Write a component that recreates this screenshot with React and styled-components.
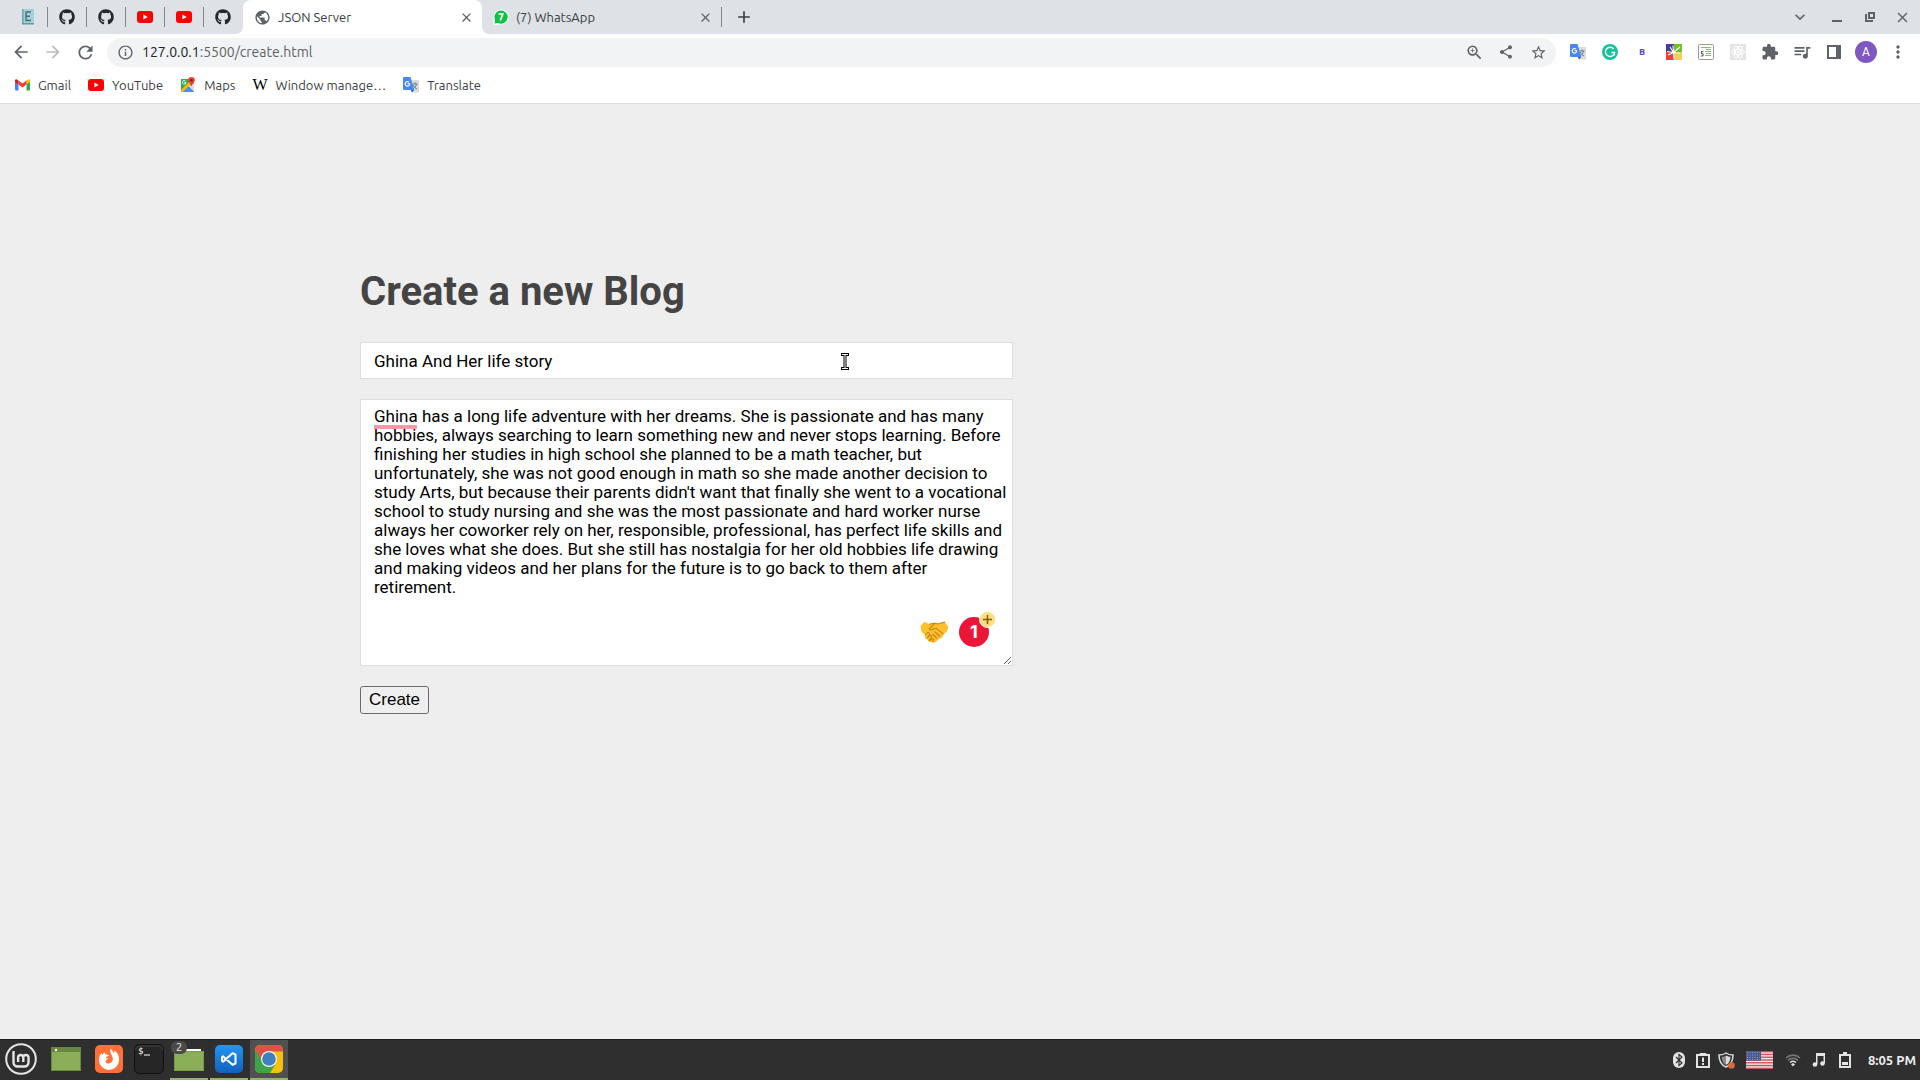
import React from 'react';
import styled, { createGlobalStyle } from 'styled-components';
import { FaGithub } from 'react-icons/fa';
import { MdArrowBack, MdArrowForward, MdRefresh, MdPublic, MdInfoOutline, MdZoomIn, MdShare, MdStarBorder, MdExtension, MdQueueMusic, MdMoreVert, MdClose, MdAdd, MdKeyboardArrowDown } from 'react-icons/md';

const Global = createGlobalStyle`
  * { box-sizing: border-box; }
  html, body { margin: 0; height: 100%; }
  #root { height: 100%; }
  body { background: #eee; }
`;
const UI = `"Ubuntu", "Noto Sans", "Open Sans", sans-serif`;

const Desktop = styled.div`
  display: flex; flex-direction: column; min-height: 100%;
  font: 13px/20px ${UI}; color: #3c4043;
`;
const Browser = styled.header`background: #fff; border-bottom: 1px solid #dadce0;`;

const TabStrip = styled.nav`
  display: flex; align-items: center; height: 34px; background: #dee1e6;
  padding-left: 9px;
`;
const PinnedTab = styled.button`
  width: 39px; height: 20px; padding: 0; border: 0; background: none;
  border-right: 1px solid ${p => (p.$last ? 'transparent' : '#80868b')};
  display: grid; place-items: center; color: #24292f;
`;
const Tab = styled.div`
  position: relative; display: flex; align-items: center; width: 239px;
  height: 34px; padding: 0 8px 0 11px; gap: 7px;
  background: ${p => (p.$active ? '#fff' : 'transparent')};
  border-radius: 8px 8px 0 0; color: #3c4043;
  &::before, &::after {
    content: ''; display: ${p => (p.$active ? 'block' : 'none')};
    position: absolute; bottom: 0; width: 8px; height: 8px;
  }
  &::before { left: -8px; background: radial-gradient(circle at 0 0, transparent 8px, #fff 8px); }
  &::after { right: -8px; background: radial-gradient(circle at 100% 0, transparent 8px, #fff 8px); }
`;
const TabTitle = styled.span`flex: 1; white-space: nowrap;`;
const IconButton = styled.button`
  display: grid; place-items: center; flex: none; padding: 0; border: 0; background: none;
  width: ${p => p.$w || 32}px; height: 28px; color: ${p => p.$color || '#5f6368'};
`;
const Divider = styled.span`width: 1px; height: 20px; background: #80868b;`;
const WindowControls = styled.div`display: flex; margin-left: auto; padding-right: 2px;`;

const Toolbar = styled.div`
  display: flex; align-items: center; height: 36px; padding: 0 6px 0 5px;
`;
const AddressBar = styled.div`
  display: flex; flex: 1; align-items: center; height: 29px; margin: 0 6px;
  padding: 0 2px 0 10px; gap: 8px; border-radius: 15px; background: #f1f3f4; color: #5f6368;
`;
const Url = styled.span`flex: 1; font-size: 14px; b { font-weight: 400; color: #202124; }`;
const AddressActions = styled.div`display: flex;`;
const Avatar = styled.span`
  display: grid; place-items: center; width: 22px; height: 22px; border-radius: 50%;
  background: #7e57c2; color: #fff; font: 12px/22px Roboto, sans-serif;
`;
const Bookmarks = styled.nav`
  display: flex; align-items: center; gap: 17px; height: 33px; padding: 0 15px 3px;
`;
const Bookmark = styled.a`
  display: flex; align-items: center; gap: 8px; color: #3c4043; text-decoration: none;
`;

const Page = styled.main`flex: 1; background: #eee; padding: 158px 20px 40px;`;
const Container = styled.div`max-width: 1200px; margin: 0 auto;`;
const Form = styled.form`
  display: flex; flex-direction: column; align-items: flex-start; gap: 20px; width: 653px; max-width: 100%;
`;
const Heading = styled.h1`margin: 0; font: 700 40px/60px Roboto, sans-serif; color: #444;`;
const Field = styled.label`position: relative; display: flex; width: 100%;`;
const TitleInput = styled.input`
  width: 100%; height: 37px; padding: 8px 13px; border: 1px solid #ddd; outline: 0;
  background: #fff; font: 17px/19px Roboto, sans-serif; color: #000;
`;
const BodyInput = styled.textarea`
  width: 100%; height: 267px; padding: 7px 4px 7px 13px; border: 1px solid #ddd; outline: 0;
  background: #fff; font: 17px/19px Roboto, sans-serif; color: #000;
`;
const CreateButton = styled.button`
  height: 28px; padding: 0 8px; border: 1px solid #6b6b6b; border-radius: 3px;
  background: #efefef; font: 17px/24px "Liberation Sans", sans-serif; color: #000;
`;
const SpellingMark = styled.span`
  position: absolute; left: 14px; top: 26px; width: 43px; height: 4px; background: #ff96a9;
`;
const WritingTools = styled.div`
  position: absolute; right: 24px; bottom: 19px; display: flex; align-items: center; gap: 10px;
`;
const Pointer = styled.svg`position: absolute; left: 481px; top: 11px;`;

const Taskbar = styled.footer`
  display: flex; align-items: stretch; gap: 2px; height: 41px; background: #2f2f2f; border-top: 1px solid #1f1f1f;
`;
const TaskItem = styled.button`
  display: grid; place-items: center; width: ${p => p.$w || 38}px; padding: 0; border: 0;
  background: ${p => (p.$focus ? '#505050' : 'transparent')};
  border-bottom: 2px solid ${p => (p.$running ? '#92b372' : 'transparent')};
`;
const Tray = styled.div`
  display: flex; align-items: center; margin-left: auto; padding-right: 4px;
`;
const TrayItem = styled.span`display: grid; place-items: center; width: ${p => p.$w || 24}px;`;
const Clock = styled.time`margin-left: 11px; font: 700 13px/20px ${UI}; color: #eee;`;

const YouTube = () => (
  <svg width="16" height="16" viewBox="0 0 16 16"><rect y="2" width="16" height="12" rx="3" fill="#f00" /><path d="M6.4 5.5v5L10.7 8z" fill="#fff" /></svg>
);
const Ebook = () => (
  <svg width="14" height="16" viewBox="0 0 14 16"><path d="M1 0h12v15H1z" fill="#9fd3d6" /><path d="M1 0h1.500v15H1z" fill="#6aa4ac" /><path d="M1 14h12v1.500H1z" fill="#6797a3" /><path d="M10 3H5v8.500h5M5 7.200h4" fill="none" stroke="#4b6d7c" strokeWidth="1.400" /></svg>
);
const WhatsApp = () => (
  <svg width="16" height="16" viewBox="0 0 16 16"><path d="M.5 15.800V8A7.500 7.500 0 1 1 8 15.500z" fill="#fff" /><path d="M1.500 14.500l.6-3.500a6.600 6.600 0 1 1 2.900 3z" fill="#0ac244" /><path d="M5.500 5h4.300l-2.500 6.500" fill="none" stroke="#fff" strokeWidth="1.700" /></svg>
);
const Gmail = () => (
  <svg width="15" height="12" viewBox="0 0 15 12"><path d="M0 2v8.500a1 1 0 0 0 1 1h2.500V5z" fill="#4285f4" /><path d="M15 2v8.500a1 1 0 0 1-1 1h-2.500V5z" fill="#34a853" /><path d="M11.500 1.500L13 .5c1-.6 2 .2 2 1.200V3l-3.500 2.600z" fill="#fbbc04" /><path d="M3.500 1.500L2 .5C1-.1 0 .7 0 1.700V3l3.500 2.600z" fill="#c5221f" /><path d="M3.500 5.600V1.500l4 3 4-3v4.100l-4 3z" fill="#ea4335" /></svg>
);
const Maps = () => (
  <svg width="16" height="16" viewBox="0 0 16 16"><path d="M1 2h13v13H1z" fill="#34a853" /><path d="M14 6v9L8 9z" fill="#dadce0" /><path d="M1 15l6.500-6.500L14 15z" fill="#4285f4" /><path d="M1 13L12 2l2 2L3 15H1z" fill="#fbbc04" /><path d="M3 15l5-5 5 5z" fill="#4a8df8" /><path d="M6 5.500H4.500M6 5.500A1.800 1.800 0 1 1 5.400 4" fill="none" stroke="#fff" /><path d="M11.500 0a3.300 3.300 0 0 1 3.300 3.300c0 2.500-2.600 3.200-3.300 6.500-.7-3.300-3.300-4-3.300-6.500A3.300 3.300 0 0 1 11.500 0z" fill="#ea4335" /><circle cx="11.500" cy="3.300" r="1.200" fill="#8c1a11" /></svg>
);
const Wiki = styled.span`width: 15px; font: 400 16px/16px "Liberation Serif", serif; color: #000;`;
const Translate = () => (
  <svg width="16" height="16" viewBox="0 0 16 16"><path d="M6 3h10v12.500H9z" fill="#dcdcdc" /><path d="M9.500 7h5M12 5.500V7m1.500 0c-.5 2.500-2 4-3.500 5m0-4c1 2 2.500 3.500 4 4" fill="none" stroke="#607988" /><path d="M1 0h6.500l3.700 13H1a1 1 0 0 1-1-1V1a1 1 0 0 1 1-1z" fill="#4688f1" /><path d="M7.800 13h3.400L9 15.500z" fill="#3a56c5" /><path d="M6 5.200A2.300 2.300 0 1 0 6.700 6.700H4.500" fill="none" stroke="#fff" strokeWidth="1.100" /></svg>
);
const Grammarly = () => (
  <svg width="16" height="16" viewBox="0 0 16 16"><circle cx="8" cy="8" r="8" fill="#15c39a" /><path d="M11.600 5A4.600 4.600 0 1 0 12.600 8.500H9.500M12.400 8.500v3" fill="none" stroke="#fff" strokeWidth="1.400" /></svg>
);
const ColorExt = () => (
  <svg width="16" height="16" viewBox="0 0 16 16"><path d="M0 0h8v8H0z" fill="#4b3c8f" /><path d="M8 0h8v8H8z" fill="#72bf2e" /><path d="M0 8h8v8H0z" fill="#f03c3c" /><path d="M8 8h8v8H8z" fill="#f5cf55" /><path d="M7.500 8.500L14 3M7.500 8.500L4 3M7.500 8.500L7 1.500M7.500 8.500L1 7.500M7.500 8.500L2 11M7.500 8.500l.5 7M7.500 8.500l6 1" stroke="#fff" strokeWidth="1.100" /></svg>
);
const SpellExt = () => (
  <svg width="16" height="16" viewBox="0 0 16 16"><rect x=".5" y=".5" width="15" height="15" rx="1" fill="#fff" stroke="#9a9a9a" /><path d="M3 3.500h10M8 5.500h5M7 7.500h6M8 9.500h5M7 11.500h6" stroke="#8bc34a" /><path d="M5.500 7.500h-2v2c2-.5 2.500 2.500 0 2.500h-.8" fill="none" stroke="#666" strokeWidth="1.200" /></svg>
);
const ReactExt = () => (
  <svg width="16" height="16" viewBox="0 0 16 16"><path d="M0 0h16v16H0z" fill="#e4e4e4" /><g fill="none" stroke="#fff"><ellipse cx="8" cy="8" rx="6.500" ry="2.600" /><ellipse cx="8" cy="8" rx="6.500" ry="2.600" transform="rotate(60 8 8)" /><ellipse cx="8" cy="8" rx="6.500" ry="2.600" transform="rotate(120 8 8)" /></g><circle cx="8" cy="8" r="1.300" fill="#fff" /></svg>
);
const BExt = styled.span`font: 700 9px/16px "Open Sans", sans-serif; color: #5b4fc4;`;
const SidePanel = () => (
  <svg width="14" height="14" viewBox="0 0 14 14"><path d="M1 1h12v12H1z" fill="none" stroke="#5f6368" strokeWidth="2" /><path d="M9 1h4v12H9z" fill="#5f6368" /></svg>
);
const Minimize = () => <svg width="10" height="14" viewBox="0 0 10 14"><path d="M0 10h10v2H0z" fill="#5f6368" /></svg>;
const Restore = () => (
  <svg width="10" height="10" viewBox="0 0 10 10"><path d="M4 1h5v5H4zM1 2v7h7" fill="none" stroke="#5f6368" strokeWidth="2" /></svg>
);
const Handshake = () => (
  <svg width="29" height="22" viewBox="0 0 29 22">
    <path d="M.5 5L4.500.8 9 3l5-1.500L18 2.500 24.500.5 28.500 6l-1.800 5-3 2-1.500 3.500-3 1.500-4.700 4-3-1-3-.3-1.500-2.500-2-.7.300-3.500L1.500 11z" fill="#fbc02d" />
    <path d="M9 3.200l5.500-1 3.500.8 7-2M14.500 3L9.300 7.500c.5 2 2.700 1.800 4.500.2l2.200-.4 7.500 5.800M14.500 10.500l5.500 5M12.500 13l4.500 4.500M5 14.500l2.500-2.800c1.500-.6 2.700 1 1.700 2.300l-2 2.500M7.500 17l2-2.500c1.700-.5 2.500 1 1.700 2.200L9 19.500M10 20l2-2.500c1.500 0 2 1.200 1.200 2.200L12 21" fill="none" stroke="#c98512" strokeWidth="1.100" />
  </svg>
);
const ErrorBadge = styled.span`
  position: relative; display: grid; place-items: center; width: 30px; height: 30px;
  border-radius: 50%; background: #eb1537; color: #fff; font: 700 18px/30px Inter, sans-serif;
`;
const Plus = styled.svg`position: absolute; left: 20px; top: -6px;`;

const Mint = () => (
  <svg width="32" height="32" viewBox="0 0 32 32" fill="none" stroke="#e6e6e6"><circle cx="16" cy="16" r="14.800" strokeWidth="2" /><path d="M8.500 8v11.500a4 4 0 0 0 4 4h7a4 4 0 0 0 4-4V14a2.700 2.700 0 0 0-5.200 0v5M18.300 14a2.700 2.700 0 0 0-5.200 0v5" strokeWidth="2.400" /></svg>
);
const FolderWindow = () => (
  <svg width="30" height="24" viewBox="0 0 30 24"><path d="M0 0h30v24H0z" fill="#8bae58" /><path d="M0 0h30v5H0z" fill="#68883f" /><path d="M.5.5h29v23H.5z" fill="none" stroke="#68883f" /><circle cx="5" cy="3" r="1.200" fill="#fff" /></svg>
);
const Firefox = () => (
  <svg width="28" height="28" viewBox="0 0 28 28"><rect width="28" height="28" rx="5" fill="#ff7139" /><path d="M15.500 3.500c2 1.500 2.500 3.500 3 4.500 1-.5 1-1.500.8-2.500C23 8 24.500 11 24 15a10 10 0 0 1-20 0c0-3 1-5.500 2.500-7l.8 2 2-3 1 2.300c1.500-.3 3 .5 4 1.700-1.500 0-3 .5-3.500 2 1.200 0 2 .3 2.500.8-2 .7-3 2-2.500 3.500 2 2.500 7 1 7-3.300 0-4-3.500-5-2.300-10.500z" fill="#fff" /></svg>
);
const Terminal = () => (
  <svg width="30" height="30" viewBox="0 0 30 30"><rect x=".5" y=".5" width="29" height="29" rx="5" fill="#262626" stroke="#101010" /><path d="M1.500 6a4 4 0 0 1 4-4h19a4 4 0 0 1 4 4" fill="none" stroke="#444" /><text x="4" y="10" fill="#fff" fontFamily="DejaVu Sans Mono" fontSize="9">$</text><path d="M10 11h6" stroke="#fff" /></svg>
);
const FilesBox = styled.span`position: relative; display: grid; padding-top: 2px;`;
const CountBadge = styled.span`
  position: absolute; left: -3px; top: -6px; width: 16px; height: 13px; border-radius: 6px;
  background: #4a4a4a; color: #eee; font: 11px/13px ${UI}; text-align: center;
`;
const Files = () => (
  <svg width="30" height="22" viewBox="0 0 30 22"><path d="M12 0h15v3H12z" fill="#fff" /><path d="M0 2h30v20H0z" fill="#8bae58" /><path d="M.5 2.500h29v19H.5z" fill="none" stroke="#789a49" /></svg>
);
const VSCode = () => (
  <svg width="28" height="28" viewBox="0 0 28 28"><defs><linearGradient id="vs" x2="0" y2="1"><stop stopColor="#2196f3" /><stop offset="1" stopColor="#1260bd" /></linearGradient></defs><rect width="28" height="28" rx="5" fill="url(#vs)" /><path d="M17.500 8.200L8 16.700 7 16V12l1-.7 9.500 8.500 3-1.300v-9z" fill="none" stroke="#fff" strokeWidth="2" strokeLinejoin="round" /></svg>
);
const Chrome = () => (
  <svg width="28" height="28" viewBox="0 0 28 28"><defs><clipPath id="cr"><rect width="28" height="28" rx="5" /></clipPath></defs><g clipPath="url(#cr)"><path d="M0 0h28v28H0z" fill="#f4c20d" /><path d="M0 4l8 12 12 4-5 8H0z" fill="#3fa34a" /><path d="M0 0h28v6.500H14L7 16 0 4z" fill="#df5246" /></g><circle cx="14" cy="14" r="8" fill="#f5f5f5" /><circle cx="14" cy="14" r="6.800" fill="#3f80bd" /></svg>
);

const Bluetooth = () => (
  <svg width="12" height="16" viewBox="0 0 12 16"><rect width="12" height="16" rx="6" fill="#e4e4e4" /><path d="M3 5l6 6-3 2.500v-11L9 5l-6 6" fill="none" stroke="#2f2f2f" strokeWidth="1.100" /></svg>
);
const Report = () => (
  <svg width="14" height="16" viewBox="0 0 14 16"><path d="M1 3h12v12H1z" fill="none" stroke="#e4e4e4" strokeWidth="2" /><path d="M4 3V1.500h6V3z" fill="#e4e4e4" stroke="#e4e4e4" /><path d="M7 5.500v4.500M7 11v2" stroke="#e4e4e4" strokeWidth="2" /></svg>
);
const Shield = () => (
  <svg width="17" height="17" viewBox="0 0 17 17"><path d="M8 1c2 1.500 4.500 2 7 2 0 6-2 10-7 12C3 13 1 9 1 3c2.500 0 5-.5 7-2z" fill="none" stroke="#ddd" strokeWidth="1.500" /><path d="M8 3.500c1.500 1 3 1.200 4.500 1.300C12.300 9 11 11.500 8 13z" fill="#ddd" /><path d="M8 3.500C6.500 4.500 5 4.700 3.500 4.800 3.700 9 5 11.500 8 13z" fill="#888" /><circle cx="13.500" cy="13.500" r="3.300" fill="#e0692f" /></svg>
);
const Flag = () => (
  <svg width="27" height="18" viewBox="0 0 27 18"><path d="M0 0h27v18H0z" fill="#f0e6e6" />{[0, 1, 2, 3, 4, 5, 6].map(i => <path key={i} d={`M0 ${i * 2.77}h27v1.385H0z`} fill="#d0505a" />)}<path d="M0 0h15v9.700H0z" fill="#475a8c" />{[1.5, 4, 6.5, 8.5].map(y => <path key={y} d={`M1 ${y}h13`} stroke="#a8b2cc" strokeWidth=".8" strokeDasharray="1 1.500" />)}</svg>
);
const Wifi = () => (
  <svg width="16" height="14" viewBox="0 0 16 14" fill="none"><path d="M1 5a10 10 0 0 1 14 0M3 7.500a7 7 0 0 1 10 0" stroke="#777" strokeWidth="1.600" /><path d="M5 9.500a4.200 4.200 0 0 1 6 0" stroke="#e4e4e4" strokeWidth="1.600" /><path d="M6 11.200a3 3 0 0 1 4 0l-2 2.300z" fill="#e4e4e4" /></svg>
);
const Music = () => (
  <svg width="14" height="14" viewBox="0 0 14 14" fill="#e4e4e4"><path d="M4 0h9v10h-1.500V3h-6v8H4z" /><circle cx="3" cy="11.500" r="2.300" /><circle cx="10.500" cy="10.500" r="2.300" /></svg>
);
const Battery = () => (
  <svg width="12" height="16" viewBox="0 0 12 16"><path d="M4 0h4v2H4z" fill="#e4e4e4" /><path d="M1 3h10v12H1z" fill="none" stroke="#e4e4e4" strokeWidth="2" /><path d="M3 10h6v3H3z" fill="#e4e4e4" /></svg>
);

const story = "Ghina has a long life adventure with her dreams. She is passionate and has many hobbies, always searching to learn something new and never stops learning. Before finishing her studies in high school she planned to be a math teacher, but unfortunately, she was not good enough in math so she made another decision to study Arts, but because their parents didn't want that finally she went to a vocational school to study nursing and she was the most passionate and hard worker nurse always her coworker rely on her, responsible, professional, has perfect life skills and she loves what she does. But she still has nostalgia for her old hobbies life drawing and making videos and her plans for the future is to go back to them after retirement.";

const pinned = [
  ['Ebook', <Ebook />], ['GitHub', <FaGithub size={16} />], ['GitHub', <FaGithub size={16} />],
  ['YouTube', <YouTube />], ['YouTube', <YouTube />], ['GitHub', <FaGithub size={16} />],
];
const extensions = [
  ['Translate', <Translate />], ['Grammarly', <Grammarly />], ['Bootstrap', <BExt>B</BExt>],
  ['Colors', <ColorExt />], ['Outline', <SpellExt />], ['React', <ReactExt />],
  ['Extensions', <MdExtension size={18} />], ['Media', <MdQueueMusic size={20} />],
  ['Side panel', <SidePanel />], ['Profile', <Avatar>A</Avatar>], ['Menu', <MdMoreVert size={20} />],
];
const bookmarks = [
  [<Gmail />, 'Gmail'], [<YouTube />, 'YouTube'], [<Maps />, 'Maps'],
  [<Wiki>W</Wiki>, 'Window manage…'], [<Translate />, 'Translate'],
];

export default function App() {
  return (
    <Desktop>
      <Global />
      <Browser>
        <TabStrip>
          {pinned.map(([name, icon], i) => <PinnedTab key={i} aria-label={name} $last={i === 5}>{icon}</PinnedTab>)}
          <Tab $active><MdPublic size={17} color="#5f6368" /><TabTitle>JSON Server</TabTitle><IconButton aria-label="Close tab" $w={16}><MdClose size={15} /></IconButton></Tab>
          <Tab><WhatsApp /><TabTitle>(7) WhatsApp</TabTitle><IconButton aria-label="Close tab" $w={16}><MdClose size={15} /></IconButton></Tab>
          <Divider />
          <IconButton aria-label="New tab" $w={44} $color="#3c4043"><MdAdd size={20} /></IconButton>
          <WindowControls>
            <IconButton aria-label="Search tabs" $w={40}><MdKeyboardArrowDown size={20} /></IconButton>
            <IconButton aria-label="Minimize" $w={34}><Minimize /></IconButton>
            <IconButton aria-label="Restore"><Restore /></IconButton>
            <IconButton aria-label="Close"><MdClose size={17} /></IconButton>
          </WindowControls>
        </TabStrip>
        <Toolbar>
          <IconButton aria-label="Back"><MdArrowBack size={20} /></IconButton>
          <IconButton aria-label="Forward" $color="#babcbe"><MdArrowForward size={20} /></IconButton>
          <IconButton aria-label="Reload"><MdRefresh size={21} /></IconButton>
          <AddressBar>
            <MdInfoOutline size={17} />
            <Url><b>127.0.0.1</b>:5500/create.html</Url>
            <AddressActions>
              <IconButton aria-label="Zoom"><MdZoomIn size={19} /></IconButton>
              <IconButton aria-label="Share"><MdShare size={16} /></IconButton>
              <IconButton aria-label="Bookmark"><MdStarBorder size={17} /></IconButton>
            </AddressActions>
          </AddressBar>
          {extensions.map(([name, icon]) => <IconButton key={name} aria-label={name}>{icon}</IconButton>)}
        </Toolbar>
        <Bookmarks>
          {bookmarks.map(([icon, name]) => <Bookmark key={name} href="#">{icon}{name}</Bookmark>)}
        </Bookmarks>
      </Browser>
      <Page>
        <Container>
          <Form>
            <Heading>Create a new Blog</Heading>
            <Field>
              <TitleInput aria-label="Blog title" defaultValue="Ghina And Her life story" />
              <Pointer width="8" height="17" viewBox="0 0 8 17"><path d="M0 1.500h8M0 15.500h8M4 1.500v14" stroke="#000" strokeWidth="3" /><path d="M1 1.500h6M1 15.500h6M4 1.500v14" stroke="#fff" /></Pointer>
            </Field>
            <Field>
              <BodyInput aria-label="Blog body" spellCheck={false} defaultValue={story} />
              <SpellingMark />
              <WritingTools><Handshake /><ErrorBadge>1<Plus width="17" height="17" viewBox="0 0 17 17"><circle cx="8.500" cy="8.500" r="8" fill="#ffdd80" stroke="#fff" /><path d="M4 8.500h9M8.500 4v9" stroke="#8a5a00" strokeWidth="1.500" /></Plus></ErrorBadge></WritingTools>
            </Field>
            <CreateButton type="button">Create</CreateButton>
          </Form>
        </Container>
      </Page>
      <Taskbar>
        <TaskItem aria-label="Menu" $w={42}><Mint /></TaskItem>
        <TaskItem aria-label="Show desktop" $w={44}><FolderWindow /></TaskItem>
        <TaskItem aria-label="Firefox"><Firefox /></TaskItem>
        <TaskItem aria-label="Terminal"><Terminal /></TaskItem>
        <TaskItem aria-label="Files" $running><FilesBox><Files /><CountBadge>2</CountBadge></FilesBox></TaskItem>
        <TaskItem aria-label="Code" $running><VSCode /></TaskItem>
        <TaskItem aria-label="Chrome" $running $focus><Chrome /></TaskItem>
        <Tray>
          <TrayItem><Bluetooth /></TrayItem>
          <TrayItem><Report /></TrayItem>
          <TrayItem><Shield /></TrayItem>
          <TrayItem $w={42}><Flag /></TrayItem>
          <TrayItem><Wifi /></TrayItem>
          <TrayItem $w={28}><Music /></TrayItem>
          <TrayItem><Battery /></TrayItem>
          <Clock>8:05 PM</Clock>
        </Tray>
      </Taskbar>
    </Desktop>
  );
}
